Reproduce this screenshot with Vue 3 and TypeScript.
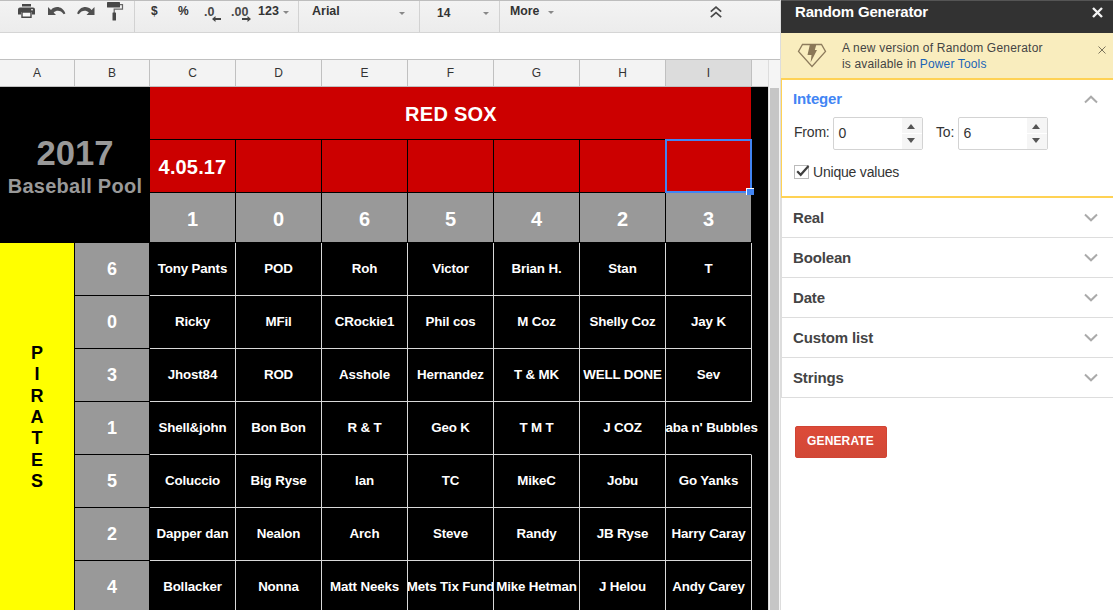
<script setup lang="ts">
import { ref } from 'vue'

interface Row {
  digit: string
  names: string[]
}

const columns = ['A', 'B', 'C', 'D', 'E', 'F', 'G', 'H', 'I', '']
const topDigits = ['1', '0', '6', '5', '4', '2', '3']
const gameDates = ['4.05.17', '', '', '', '', '', '']
const sideLetters = 'PIRATES'.split('')

const rows: Row[] = [
  { digit: '6', names: ['Tony Pants', 'POD', 'Roh', 'Victor', 'Brian H.', 'Stan', 'T'] },
  { digit: '0', names: ['Ricky', 'MFil', 'CRockie1', 'Phil cos', 'M Coz', 'Shelly Coz', 'Jay K'] },
  { digit: '3', names: ['Jhost84', 'ROD', 'Asshole', 'Hernandez', 'T & MK', 'WELL DONE', 'Sev'] },
  { digit: '1', names: ['Shell&john', 'Bon Bon', 'R & T', 'Geo K', 'T M T', 'J COZ', "aba n' Bubbles"] },
  { digit: '5', names: ['Coluccio', 'Big Ryse', 'Ian', 'TC', 'MikeC', 'Jobu', 'Go Yanks'] },
  { digit: '2', names: ['Dapper dan', 'Nealon', 'Arch', 'Steve', 'Randy', 'JB Ryse', 'Harry Caray'] },
  { digit: '4', names: ['Bollacker', 'Nonna', 'Matt Neeks', 'Mets Tix Fund', 'Mike Hetman', 'J Helou', 'Andy Carey'] },
]

const sections = ['Real', 'Boolean', 'Date', 'Custom list', 'Strings']
const from = ref(0)
const to = ref(6)
const unique = ref(true)
</script>

<template>
  <div class="app">
    <main class="sheet">
      <div class="toolbar">
        <div class="group icons">
          <svg width="17" height="15" viewBox="0 0 17 15" fill="#484848">
            <path d="M4 0h9v2.500H4zM2 3.500h13a2 2 0 0 1 2 2v5h-3V8H3v2.500H0v-5a2 2 0 0 1 2-2z" />
            <path d="M4 8h9v5.300H4z" fill="#f8f8f8" stroke="#484848" stroke-width="1.400" />
            <rect x="13.200" y="5" width="1.600" height="1.400" fill="#eee" />
          </svg>
          <svg width="18" height="10" viewBox="0 0 18 10" fill="#505050">
            <path d="M0 1v8h8L5.600 6.500C8.500 4 13 4.200 15.700 8.300l1.700-.9C14.500.2 7.200-.6 3 3.900z" />
          </svg>
          <svg width="18" height="10" viewBox="0 0 18 10" fill="#505050">
            <path d="M17.500 1v8h-8l2.400-2.500C9 4 4.500 4.200 1.800 8.300L.1 7.400C3 .2 10.300-.6 14.500 3.900z" />
          </svg>
          <svg class="roller" width="17" height="19" viewBox="0 0 17 19" fill="#484848">
            <rect width="13" height="5.600" rx=".6" />
            <path d="M13 2.600h2.500v4.600H7.200v4" fill="none" stroke="#666" stroke-width="1.200" />
            <rect x="5.500" y="10.500" width="3.500" height="8" rx=".5" />
          </svg>
        </div>
        <div class="group formats">
          <span class="fmt dollar">$</span>
          <span class="fmt percent">%</span>
          <span class="fmt dec">.0
            <svg width="9" height="6" viewBox="0 0 9 6"><path d="M0 3l3.500-3v2H9v2H3.500v2z" fill="#444" /></svg>
          </span>
          <span class="fmt dec two">.00
            <svg width="9" height="6" viewBox="0 0 9 6"><path d="M9 3L5.500 0v2H0v2h5.500v2z" fill="#444" /></svg>
          </span>
          <span class="fmt num">123</span>
          <i class="caret"></i>
        </div>
        <div class="group family"><span>Arial</span><i class="caret"></i></div>
        <div class="group size"><span>14</span><i class="caret"></i></div>
        <div class="group more">
          <span>More</span><i class="caret"></i>
          <svg class="collapse" width="12" height="12" viewBox="0 0 12 12" fill="none" stroke="#484848" stroke-width="1.700">
            <path d="M.8 5.700L6 1.200l5.200 4.500M.8 11.200L6 6.700l5.200 4.500" />
          </svg>
        </div>
      </div>
      <div class="formula"></div>

      <div class="grid-wrap">
        <div class="grid">
          <div v-for="(c, i) in columns" :key="i" class="col-head" :class="{ active: c === 'I' }">{{ c }}</div>

          <div class="pool-title">
            <span class="year">2017</span>
            <span class="pool">Baseball Pool</span>
          </div>
          <div class="team">RED SOX</div>
          <div v-for="(d, i) in gameDates" :key="'g' + i" class="game" :class="{ selected: i === 6 }">{{ d }}</div>
          <div v-for="(d, i) in topDigits" :key="'t' + i" class="top-digit">{{ d }}</div>
          <div class="margin"></div>
          <div class="side-team"><span v-for="(l, i) in sideLetters" :key="i">{{ l }}</span></div>
          <template v-for="(row, r) in rows" :key="'r' + r">
            <div class="side-digit">{{ row.digit }}</div>
            <div
              v-for="(name, i) in row.names"
              :key="name"
              class="name"
              :class="{ spill: r === 3 && i === 6 }"
            ><span>{{ name }}</span></div>
          </template>
        </div>
        <div class="scroll"><div class="thumb"></div></div>
      </div>
    </main>

    <aside class="sidebar">
      <header class="bar">
        <span>Random Generator</span>
        <svg width="11" height="11" viewBox="0 0 11 11" stroke="#f4f4f4" stroke-width="2.400"><path d="M1 1l9 9M10 1l-9 9" /></svg>
      </header>
      <div class="banner">
        <svg class="gem" width="30" height="25" viewBox="0 0 30 25">
          <path d="M5.500 1.500h19L28.500 8.500 15 23.500 1.500 8.500z" fill="none" stroke="#8d7b5c" stroke-width="1.300" />
          <path d="M13 1h6.500l-1.700 6H20L13.600 19.500l.9-7.600H10.500z" fill="#8a7757" />
        </svg>
        <p><span class="l1">A new version of Random Generator</span><br /><span class="l2">is available in <a>Power Tools</a></span></p>
        <svg class="dismiss" width="8" height="8" viewBox="0 0 8 8" stroke="#7c745c" stroke-width="1"><path d="M.5.5l7 7M7.500.5l-7 7" /></svg>
      </div>
      <section class="integer">
        <div class="heading">
          <span>Integer</span>
          <svg width="14" height="9" viewBox="0 0 14 9" fill="none" stroke="#aaa" stroke-width="2"><path d="M1 7.500l6-5.800 6 5.800" /></svg>
        </div>
        <div class="fields">
          <label class="from">From:</label>
          <div class="spin"><span>{{ from }}</span><div class="steps"><b @click="from++"><i class="up"></i></b><b @click="from--"><i class="down"></i></b></div></div>
          <label class="to">To:</label>
          <div class="spin"><span>{{ to }}</span><div class="steps"><b @click="to++"><i class="up"></i></b><b @click="to--"><i class="down"></i></b></div></div>
        </div>
        <div class="check" @click="unique = !unique">
          <span class="box">
            <svg v-if="unique" width="14" height="12" viewBox="0 0 14 12" fill="none" stroke="#404040" stroke-width="2.200"><path d="M1.200 6.300l3.500 3.500L12.500 1" /></svg>
          </span>
          <span class="check-text">Unique values</span>
        </div>
      </section>
      <section v-for="s in sections" :key="s" class="closed">
        <span>{{ s }}</span>
        <svg width="14" height="9" viewBox="0 0 14 9" fill="none" stroke="#aaa" stroke-width="2"><path d="M1 1.500l6 5.800 6-5.800" /></svg>
      </section>
      <button class="generate">GENERATE</button>
    </aside>
  </div>
</template>

<style>
body {
  margin: 0;
  overflow: hidden;
}
</style>

<style scoped>
.app {
  display: flex;
  width: 1113px;
  height: 610px;
  overflow: hidden;
  background: #fff;
  font-family: "Liberation Sans", Arial, sans-serif;
}
.app *, .app *::before, .app *::after { box-sizing: border-box; }
.sheet {
  width: 780px;
  height: 610px;
  flex: none;
}

.toolbar {
  display: flex;
  height: 33px;
  border-top: 1px solid #bdbdbd;
  border-bottom: 1px solid #d5d5d5;
  background: linear-gradient(#f3f3f3, #ececec);
  color: #333;
  font-size: 12px;
  font-weight: bold;
}
.group {
  display: flex;
  height: 31px;
  padding-top: 3px;
  border-right: 1px solid #d2d2d2;
  line-height: 14px;
  white-space: nowrap;
}
.icons {
  width: 135px;
  padding-left: 18px;
  gap: 12px;
  align-items: flex-start;
}
.icons svg { flex: none; }
.icons svg:nth-child(2) { margin: 2px -1px 0 1px; }
.icons svg:nth-child(3) { margin-top: 2px; }
.icons .roller { margin-top: -2px; }
.formats {
  width: 164px;
  padding-left: 16px;
}
.fmt { flex: none; }
.dollar { width: 27px; }
.percent { width: 26px; font-size: 12px; }
.dec {
  position: relative;
  width: 27px;
  padding-top: 1px;
  color: #484848;
  font-size: 12.500px;
}
.dec svg {
  position: absolute;
  left: 8px;
  top: 12px;
}
.dec.two svg { left: 11px; }
.num { width: 25px; font-size: 12.500px; }
.caret {
  width: 0;
  height: 0;
  margin-top: 7px;
  border: 3px solid transparent;
  border-top-color: #888;
  border-bottom: 0;
}
.family {
  width: 121px;
  padding-left: 13px;
  font-size: 12.500px;
}
.family span { width: 87px; }
.family .caret, .size .caret { margin-top: 8px; }
.size {
  width: 80px;
  padding-left: 17px;
}
.size span { width: 46px; padding-top: 2px; }
.more {
  flex: 1;
  border: 0;
  padding-left: 10px;
}
.more span { width: 38px; font-size: 12.300px; }
.collapse { margin: 2px 0 0 156px; }
.formula {
  height: 27px;
  border-bottom: 1px solid #c0c0c0;
  background: #fff;
}

.grid-wrap {
  display: flex;
  height: 550px;
}
.grid {
  display: grid;
  flex: none;
  width: 768px;
  grid-template-columns: 75px 75px repeat(7, 86px) 16px;
  grid-template-rows: 27px 53px 53px 50px repeat(7, 53px);
  background: #000;
  overflow: hidden;
  color: #fff;
  font-weight: bold;
}
.col-head {
  display: flex;
  justify-content: center;
  height: 27px;
  padding-top: 6px;
  border-right: 1px solid #c0c0c0;
  border-bottom: 1px solid #c0c0c0;
  background: #f3f3f3;
  color: #333;
  font-size: 12px;
  line-height: 14px;
  font-weight: normal;
}
.col-head:nth-child(10) { border-right: 0; }
.col-head.active { background: #dcdcdc; }
.pool-title {
  grid-column: 1 / 3;
  grid-row: 2 / 5;
  display: flex;
  flex-direction: column;
  align-items: center;
  padding-top: 46px;
  color: #999;
  white-space: nowrap;
}
.year {
  font-size: 34.670px;
  line-height: 40px;
}
.pool {
  font-size: 20px;
  line-height: 26px;
  letter-spacing: .25px;
}
.team {
  grid-column: 3 / 10;
  grid-row: 2;
  margin-right: 1px;
  padding-left: 1px;
  border-bottom: 1px solid #000;
  background: #c00;
  font-size: 20px;
  line-height: 54px;
  letter-spacing: .25px;
  text-align: center;
}
.game {
  grid-row: 3;
  border: solid #000;
  border-width: 0 1px 1px 0;
  background: #c00;
  font-size: 20px;
  line-height: 54px;
  letter-spacing: .15px;
  text-align: center;
}
.top-digit {
  grid-row: 4;
  border: solid #000;
  border-width: 0 1px 1px 0;
  background: #999;
  font-size: 20px;
  line-height: 52px;
  text-align: center;
}
.selected {
  position: relative;
}
.selected::before {
  content: "";
  position: absolute;
  left: -1px;
  top: -1px;
  width: 87px;
  height: 54px;
  border: 2px solid #4285f4;
}
.selected::after {
  content: "";
  position: absolute;
  right: -3px;
  bottom: -3px;
  width: 8px;
  height: 7px;
  border: solid #fff;
  border-width: 1px 0 0 1px;
  background: #4285f4;
}
.margin {
  grid-column: 10;
  grid-row: 2 / 12;
}
.side-team {
  grid-column: 1;
  grid-row: 5 / 12;
  display: flex;
  flex-direction: column;
  align-items: center;
  padding-top: 100px;
  border-right: 1px solid #000;
  background: #ff0;
  color: #000;
  font-size: 18px;
  line-height: 21.330px;
}
.side-digit {
  grid-column: 2;
  border: solid #000;
  border-width: 0 1px 1px 0;
  background: #999;
  font-size: 18px;
  line-height: 53px;
  text-align: center;
}
.name {
  display: flex;
  justify-content: center;
  overflow: hidden;
  border: solid #d9d9d9;
  border-width: 0 1px 1px 0;
  font-size: 13.330px;
  line-height: 51px;
  letter-spacing: -.15px;
  white-space: nowrap;
}
.spill {
  justify-content: flex-start;
  overflow: visible;
  border-right-color: #000;
}
.spill span { margin-left: -.5px; }
.scroll {
  width: 12px;
  border-left: 1px solid #ddd;
  padding: 28px 1px 0;
  background: #f5f5f5;
}
.thumb {
  height: 522px;
  background: #c6c6c6;
}

.sidebar {
  width: 333px;
  height: 610px;
  border-left: 1px solid #ddd;
  background: #fff;
  color: #333;
}
.bar {
  display: flex;
  justify-content: space-between;
  height: 33px;
  padding: 2px 10px 0 14px;
  border-top: 1px solid #555;
  background: #323232;
  color: #fff;
  font-size: 15px;
  line-height: 17px;
  letter-spacing: -.18px;
  font-weight: bold;
}
.bar svg { margin-top: 4px; }
.banner {
  display: flex;
  height: 45px;
  padding-left: 16px;
  background: #f9edbe;
}
.gem { margin-top: 10px; }
.banner p {
  width: 256px;
  flex: none;
  margin: 7px 0 0 15px;
  color: #444;
  font-size: 12px;
  line-height: 16px;
  letter-spacing: .2px;
}
.banner .l2 { letter-spacing: .15px; }
.banner a { color: #1a64b7; }
.dismiss { flex: none; margin: 13px 0 0 -.5px; }
.integer {
  height: 120px;
  border: solid #ffd254;
  border-width: 2px 0 2px 1px;
}
.heading {
  display: flex;
  justify-content: space-between;
  padding: 10px 15px 0 11px;
  color: #4285f4;
  font-size: 15px;
  line-height: 18px;
  letter-spacing: -.15px;
  font-weight: bold;
}
.heading svg { margin-top: 5px; }
.fields {
  display: flex;
  margin-top: 9px;
  padding-left: 12px;
  font-size: 14px;
}
.fields label { line-height: 31px; letter-spacing: -.2px; }
.from { width: 39px; }
.to { width: 22px; margin-left: 13px; }
.spin {
  display: flex;
  justify-content: space-between;
  width: 90px;
  height: 33px;
  border: 1px solid #d3d3d3;
  border-radius: 2px;
  line-height: 31px;
}
.spin span { padding-left: 4.500px; }
.steps {
  display: grid;
  grid-template-rows: 15px 15px;
  gap: 1px;
  width: 20px;
}
.steps b {
  display: flex;
  align-items: center;
  justify-content: center;
  padding-right: 2px;
  background: #f5f5f5;
}
.up, .down {
  border: 4px solid transparent;
  border-bottom: 5px solid #555;
  border-top: 0;
}
.up { margin-top: 1px; }
.down {
  margin-bottom: 2px;
  border-bottom: 0;
  border-top: 5px solid #555;
}
.check {
  display: flex;
  margin-top: 12px;
  padding-left: 12px;
  font-size: 14px;
  line-height: 20px;
}
.box {
  position: relative;
  width: 15px;
  height: 14px;
  margin-top: 3px;
  border: 1px solid #bbb;
}
.box svg {
  position: absolute;
  left: 1px;
  top: -1px;
}
.check-text { margin-left: 4px; letter-spacing: -.2px; }
.closed {
  display: flex;
  justify-content: space-between;
  height: 40px;
  padding: 10px 15px 0 11px;
  border: solid #ddd;
  border-width: 0 0 1px 1px;
  color: #444;
  font-size: 15px;
  line-height: 20px;
  letter-spacing: -.15px;
  font-weight: bold;
}
.closed svg { margin-top: 5px; }
.generate {
  display: block;
  width: 92px;
  height: 32px;
  margin: 28px 0 0 14px;
  padding: 0 1px 3px 0;
  border: 1px solid #d04434;
  border-radius: 2px;
  background: linear-gradient(#dd4b39, #d14836);
  color: #fff;
  font: bold 12px "Liberation Sans", Arial, sans-serif;
  letter-spacing: .15px;
}
</style>
